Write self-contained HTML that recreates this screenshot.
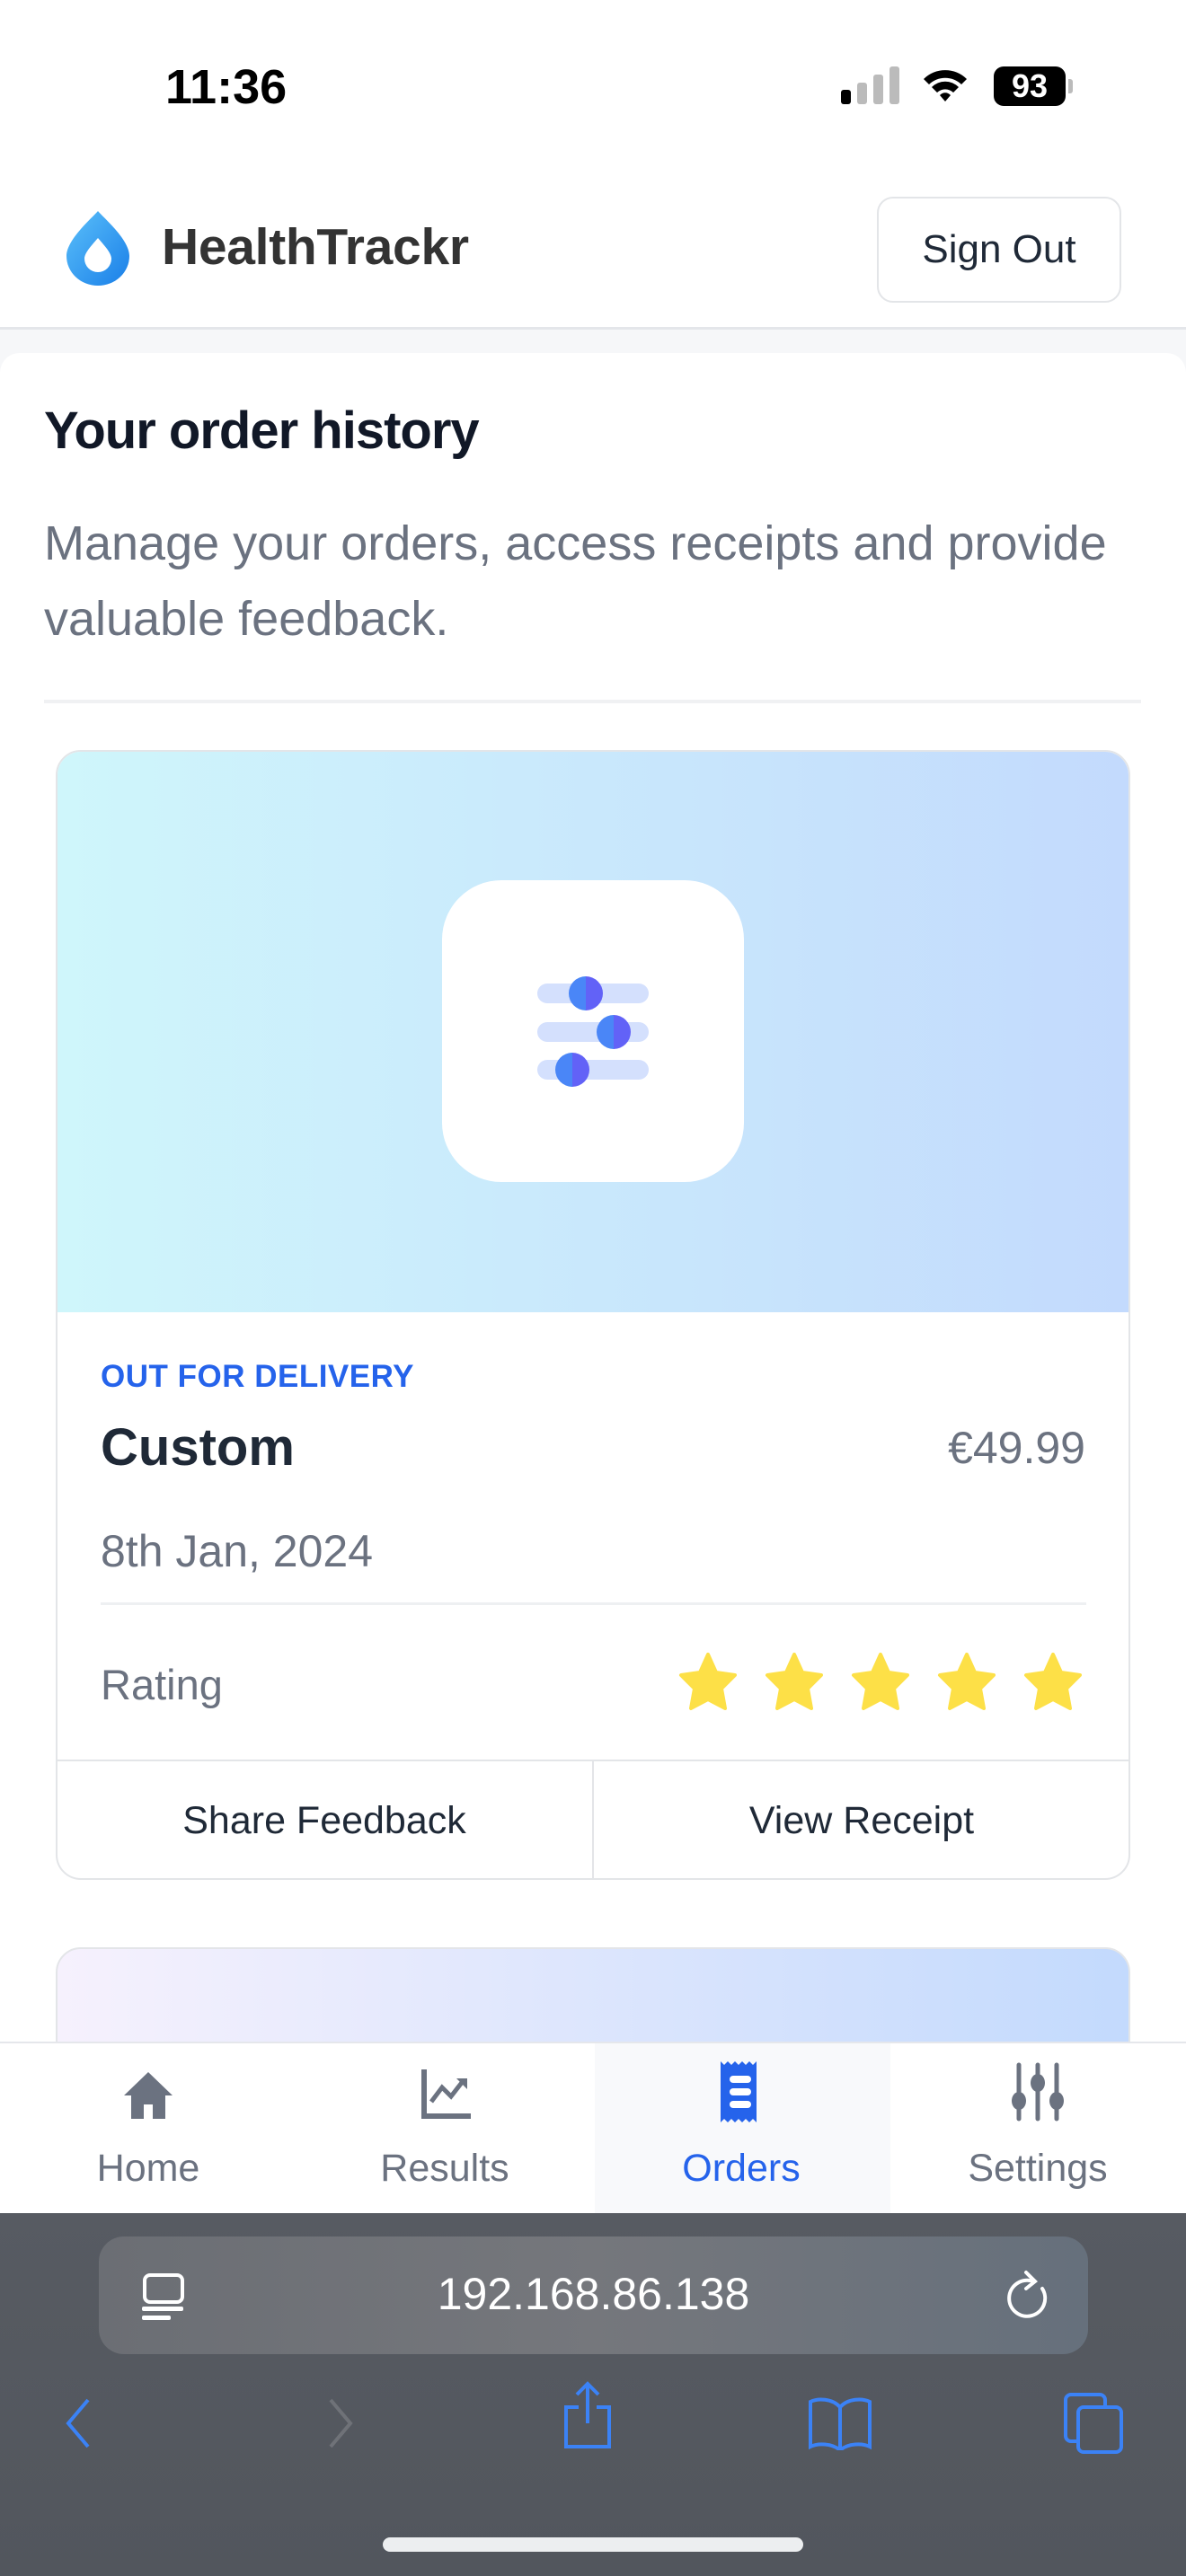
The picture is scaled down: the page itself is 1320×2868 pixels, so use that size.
<!DOCTYPE html>
<html><head><meta charset="utf-8"><style>
*{margin:0;padding:0;box-sizing:border-box}
body{width:1320px;height:2868px;position:relative;overflow:hidden;background:#f6f7f9;font-family:"Liberation Sans",sans-serif}
.a{position:absolute}
.t{white-space:nowrap}
</style></head><body>
<div class="a" style="left:0;top:0;width:1320px;height:367px;background:#fff;border-bottom:3px solid #e4e6ea"></div>
<div class="a t" style="left:184px;top:66px;font-size:54px;font-weight:bold;color:#000">11:36</div>
<svg class="a" style="left:934px;top:74px" width="70" height="44"><rect x="2" y="26" width="11" height="16" rx="3" fill="#000"/><rect x="20" y="18" width="11" height="24" rx="3" fill="#bbb"/><rect x="38" y="9" width="11" height="33" rx="3" fill="#bbb"/><rect x="56" y="0" width="11" height="42" rx="3" fill="#bbb"/></svg>
<svg class="a" style="left:1024px;top:72px" width="56" height="44" viewBox="0 0 56 44"><path d="M4 16a34 34 0 0 1 48 0l-6 6a26 26 0 0 0-36 0z M13 25a21 21 0 0 1 30 0l-6 6a13 13 0 0 0-18 0z M22 34a8 8 0 0 1 12 0l-6 7z" fill="#000"/></svg>
<div class="a t" style="left:1106px;top:74px;width:80px;height:44px;background:#000;border-radius:11px;color:#fff;font-size:36px;font-weight:bold;text-align:center;line-height:44px">93</div>
<div class="a" style="left:1189px;top:88px;width:5px;height:16px;background:#bbb;border-radius:0 3px 3px 0"></div>

<svg class="a" style="left:72px;top:233px" width="74" height="86" viewBox="0 0 74 86"><defs><linearGradient id="lg" x1="0" y1="0" x2="1" y2="1"><stop offset="0" stop-color="#5bc0fa"/><stop offset="1" stop-color="#1a7fe8"/></linearGradient></defs><path d="M37 2C30 10 2 34 2 52a35 33 0 0 0 70 0C72 34 44 10 37 2z" fill="url(#lg)"/><path d="M37 32C32 38 22 48 22 55a15 15 0 0 0 30 0C52 48 42 38 37 32z" fill="#fff"/></svg>
<div class="a t" style="left:180px;top:242px;font-size:57px;font-weight:bold;color:#333;letter-spacing:-0.3px">HealthTrackr</div>
<div class="a t" style="left:976px;top:219px;width:272px;height:118px;border:2px solid #e3e5e8;border-radius:18px;background:#fff;font-size:44px;color:#1f2937;text-align:center;line-height:114px">Sign Out</div>

<div class="a" style="left:0;top:393px;width:1320px;height:1900px;background:#fff;border-radius:22px 22px 0 0"></div>
<div class="a t" style="left:49px;top:446px;font-size:58px;font-weight:bold;color:#111827;letter-spacing:-1px">Your order history</div>
<div class="a" style="left:49px;top:563px;width:1260px;font-size:54px;line-height:84px;color:#6b7280">Manage your orders, access receipts and provide valuable feedback.</div>
<div class="a" style="left:49px;top:779px;width:1221px;height:4px;background:#f0f1f3"></div>

<div class="a" style="left:62px;top:835px;width:1196px;height:1258px;border:2px solid #e3e5e8;border-radius:28px;overflow:hidden;background:#fff">
  <div class="a" style="left:0;top:0;width:1196px;height:624px;background:linear-gradient(90deg,#cff6fb,#c3dafd)"></div>
</div>
<div class="a" style="left:492px;top:980px;width:336px;height:336px;background:#fff;border-radius:66px"></div>
<svg class="a" style="left:590px;top:1080px" width="140" height="130">
  <rect x="8" y="15" width="124" height="22" rx="11" fill="#d4e0fd"/><rect x="8" y="58" width="124" height="22" rx="11" fill="#d4e0fd"/><rect x="8" y="100" width="124" height="22" rx="11" fill="#d4e0fd"/>
  <path d="M62 7a19 19 0 0 0 0 38z" fill="#4a86f7"/><path d="M62 7a19 19 0 0 1 0 38z" fill="#6262f7"/>
  <path d="M93 50a19 19 0 0 0 0 38z" fill="#4a86f7"/><path d="M93 50a19 19 0 0 1 0 38z" fill="#6262f7"/>
  <path d="M47 92a19 19 0 0 0 0 38z" fill="#4a86f7"/><path d="M47 92a19 19 0 0 1 0 38z" fill="#6262f7"/>
</svg>
<div class="a t" style="left:112px;top:1513px;font-size:35px;font-weight:bold;color:#2563eb;letter-spacing:0.5px">OUT FOR DELIVERY</div>
<div class="a t" style="left:112px;top:1578px;font-size:58px;font-weight:bold;color:#1f2937">Custom</div>
<div class="a t" style="left:958px;top:1583px;width:250px;text-align:right;font-size:50px;color:#6b7280">€49.99</div>
<div class="a t" style="left:112px;top:1698px;font-size:50px;color:#6b7280">8th Jan, 2024</div>
<div class="a" style="left:112px;top:1784px;width:1097px;height:3px;background:#eef0f2"></div>
<div class="a t" style="left:112px;top:1848px;font-size:47px;color:#6b7280">Rating</div>
<svg class="a" style="left:750px;top:1840px" width="470" height="70">
  <defs><path id="s" d="M34 2l9 20 21 3-15 15 4 22-19-10-19 10 4-22L4 25l21-3z" fill="#fde047" stroke="#fde047" stroke-width="4" stroke-linejoin="round"/></defs>
  <use href="#s" x="4"/><use href="#s" x="100"/><use href="#s" x="196"/><use href="#s" x="292"/><use href="#s" x="388"/>
</svg>
<div class="a" style="left:62px;top:1959px;width:1196px;height:2px;background:#e3e5e8"></div>
<div class="a" style="left:659px;top:1960px;width:2px;height:132px;background:#e3e5e8"></div>
<div class="a t" style="left:62px;top:2003px;width:598px;text-align:center;font-size:43px;color:#1f2937">Share Feedback</div>
<div class="a t" style="left:660px;top:2003px;width:598px;text-align:center;font-size:43px;color:#1f2937">View Receipt</div>

<div class="a" style="left:62px;top:2168px;width:1196px;height:200px;border:2px solid #e3e5e8;border-radius:28px;background:linear-gradient(90deg,#f6f1fd,#c3dafd)"></div>

<div class="a" style="left:0;top:2273px;width:1320px;height:192px;background:#fff;border-top:2px solid #e5e7eb"></div>
<div class="a" style="left:662px;top:2275px;width:329px;height:190px;background:#f8f9fb"></div>
<svg class="a" style="left:136px;top:2305px" width="58" height="56" viewBox="0 0 58 56"><path d="M29 2L2 28h8v26h14V38h10v16h14V28h8z" fill="#6b7280"/></svg>
<svg class="a" style="left:468px;top:2300px" width="58" height="60" viewBox="0 0 58 60"><path d="M4 4v52h52" stroke="#6b7280" stroke-width="6" fill="none"/><path d="M12 40l12-16 10 10 14-18" stroke="#6b7280" stroke-width="5" fill="none"/><path d="M40 14h12v12z" fill="#6b7280"/></svg>
<svg class="a" style="left:802px;top:2295px" width="44" height="68" viewBox="0 0 44 68"><path d="M0 0l4 4 4-4 4 4 4-4 4 4 4-4 4 4 4-4 4 4 4-4v68l-4-4-4 4-4-4-4 4-4-4-4 4-4-4-4 4-4-4-4 4z" fill="#2563eb"/><rect x="10" y="16" width="24" height="8" rx="4" fill="#fff"/><rect x="10" y="30" width="24" height="8" rx="4" fill="#fff"/><rect x="10" y="44" width="24" height="8" rx="4" fill="#fff"/></svg>
<svg class="a" style="left:1126px;top:2295px" width="58" height="68" viewBox="0 0 58 68"><g stroke="#6b7280" stroke-width="5" stroke-linecap="round"><line x1="8" y1="4" x2="8" y2="64"/><line x1="29" y1="4" x2="29" y2="64"/><line x1="50" y1="4" x2="50" y2="64"/></g><ellipse cx="8" cy="44" rx="8" ry="10" fill="#6b7280"/><ellipse cx="29" cy="24" rx="8" ry="10" fill="#6b7280"/><ellipse cx="50" cy="44" rx="8" ry="10" fill="#6b7280"/></svg>
<div class="a t" style="left:65px;top:2390px;width:200px;text-align:center;font-size:43px;color:#6b7280">Home</div>
<div class="a t" style="left:395px;top:2390px;width:200px;text-align:center;font-size:43px;color:#6b7280">Results</div>
<div class="a t" style="left:725px;top:2390px;width:200px;text-align:center;font-size:43px;color:#2563eb">Orders</div>
<div class="a t" style="left:1055px;top:2390px;width:200px;text-align:center;font-size:43px;color:#6b7280">Settings</div>

<div class="a" style="left:0;top:2464px;width:1320px;height:404px;background:linear-gradient(180deg,#575b62,#52565d)"></div>
<div class="a" style="left:110px;top:2490px;width:1101px;height:131px;border-radius:28px;background:linear-gradient(90deg,#6b6e74,#75777c 50%,#66707c)"></div>
<svg class="a" style="left:158px;top:2530px" width="50" height="54"><rect x="3" y="3" width="42" height="30" rx="6" stroke="#fff" stroke-width="4" fill="none"/><rect x="0" y="38" width="46" height="5" rx="2" fill="#fff"/><rect x="0" y="48" width="32" height="5" rx="2" fill="#fff"/></svg>
<div class="a t" style="left:110px;top:2525px;width:1101px;text-align:center;font-size:50px;color:#fff">192.168.86.138</div>
<svg class="a" style="left:1120px;top:2526px" width="50" height="62"><path d="M30 14A20 20 0 1 0 40 22" stroke="#fff" stroke-width="4" fill="none" stroke-linecap="round"/><path d="M22 4l10 10-10 8" stroke="#fff" stroke-width="4" fill="none" stroke-linecap="round"/></svg>
<svg class="a" style="left:68px;top:2670px" width="40" height="56"><path d="M30 2L8 28l22 26" stroke="#3b82f6" stroke-width="4" fill="none"/></svg>
<svg class="a" style="left:358px;top:2670px" width="40" height="56"><path d="M10 2l22 26-22 26" stroke="#6f7278" stroke-width="4" fill="none"/></svg>
<svg class="a" style="left:624px;top:2650px" width="60" height="80"><path d="M20 30H6v44h48V30H40" stroke="#3b82f6" stroke-width="4" fill="none"/><path d="M30 4v44M18 16L30 4l12 12" stroke="#3b82f6" stroke-width="4" fill="none"/></svg>
<svg class="a" style="left:898px;top:2666px" width="74" height="62"><path d="M37 14C28 4 12 4 4 8v50c8-4 24-4 33 4c9-8 25-8 33-4V8C62 4 46 4 37 14z M37 14v48" stroke="#3b82f6" stroke-width="4" fill="none"/></svg>
<svg class="a" style="left:1182px;top:2662px" width="72" height="72"><rect x="4" y="4" width="44" height="52" rx="6" stroke="#3b82f6" stroke-width="4" fill="none"/><rect x="18" y="18" width="48" height="50" rx="6" stroke="#3b82f6" stroke-width="4" fill="#53575e"/></svg>
<div class="a" style="left:426px;top:2825px;width:468px;height:16px;border-radius:8px;background:#eceef0"></div>
</body></html>
